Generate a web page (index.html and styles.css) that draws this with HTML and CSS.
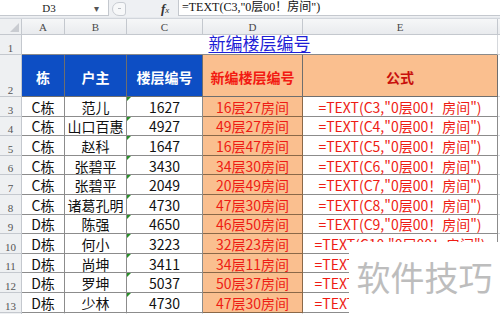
FILE: index.html
```html
<!DOCTYPE html>
<html lang="zh-CN">
<head>
<meta charset="utf-8">
<title>新编楼层编号</title>
<link rel="stylesheet" href="styles.css">
</head>
<body>
<div class="fbar">
  <div class="namebox"><span class="nb-text">D3</span><span class="nb-arrow">▾</span></div>
  <div class="fb-mid"><span class="pill"><span class="pill-dot"></span></span><span class="fx"><i>f</i><span class="fx-x">x</span></span></div>
  <div class="fb-input">=TEXT(C3,"0层00！房间")</div>
</div>
<div class="fgap"></div>
<div class="sheet">
  <div class="corner"><svg width="9" height="9" viewBox="0 0 9 9"><polygon points="9,0 9,9 0,9" fill="#c9ccd1"/></svg></div>
  <div class="ch">A</div><div class="ch">B</div><div class="ch">C</div><div class="ch">D</div><div class="ch">E</div><div class="ch end"></div>

  <div class="rh">1</div>
  <div class="title"><span>新编楼层编号</span></div>
  <div class="blank"></div>

  <div class="rh">2</div>
  <div class="hd blue">栋</div><div class="hd blue">户主</div><div class="hd blue">楼层编号</div><div class="hd peach red">新编楼层编号</div><div class="hd peach dred">公式</div>
  <div class="blank"></div>

  <div class="rh">3</div><div class="c">C栋</div><div class="c">范儿</div><div class="c num">1627</div><div class="c d">16层27房间</div><div class="c e">=TEXT(C3,"0层00！房间")</div><div class="blank"></div>
  <div class="rh">4</div><div class="c">C栋</div><div class="c">山口百惠</div><div class="c num">4927</div><div class="c d">49层27房间</div><div class="c e">=TEXT(C4,"0层00！房间")</div><div class="blank"></div>
  <div class="rh">5</div><div class="c">C栋</div><div class="c">赵科</div><div class="c num">1647</div><div class="c d">16层47房间</div><div class="c e">=TEXT(C5,"0层00！房间")</div><div class="blank"></div>
  <div class="rh">6</div><div class="c">C栋</div><div class="c">张碧平</div><div class="c num">3430</div><div class="c d">34层30房间</div><div class="c e">=TEXT(C6,"0层00！房间")</div><div class="blank"></div>
  <div class="rh">7</div><div class="c">C栋</div><div class="c">张碧平</div><div class="c num">2049</div><div class="c d">20层49房间</div><div class="c e">=TEXT(C7,"0层00！房间")</div><div class="blank"></div>
  <div class="rh">8</div><div class="c">C栋</div><div class="c">诸葛孔明</div><div class="c num">4730</div><div class="c d">47层30房间</div><div class="c e">=TEXT(C8,"0层00！房间")</div><div class="blank"></div>
  <div class="rh">9</div><div class="c">D栋</div><div class="c">陈强</div><div class="c num">4650</div><div class="c d">46层50房间</div><div class="c e">=TEXT(C9,"0层00！房间")</div><div class="blank"></div>
  <div class="rh">10</div><div class="c">D栋</div><div class="c">何小</div><div class="c num">3223</div><div class="c d">32层23房间</div><div class="c e">=TEXT(C10,"0层00！房间")</div><div class="blank"></div>
  <div class="rh">11</div><div class="c">D栋</div><div class="c">尚坤</div><div class="c num">3411</div><div class="c d">34层11房间</div><div class="c e">=TEXT(C11,"0层00！房间")</div><div class="blank"></div>
  <div class="rh">12</div><div class="c">D栋</div><div class="c">罗坤</div><div class="c num">5037</div><div class="c d">50层37房间</div><div class="c e">=TEXT(C12,"0层00！房间")</div><div class="blank"></div>
  <div class="rh">13</div><div class="c">D栋</div><div class="c">少林</div><div class="c num">4730</div><div class="c d">47层30房间</div><div class="c e">=TEXT(C13,"0层00！房间")</div><div class="blank"></div>
  <div class="rh"></div><div class="g"></div><div class="g"></div><div class="g"></div><div class="g"></div><div class="g"></div><div class="blank"></div>
</div>
<div class="watermark">软件技巧</div>
</body>
</html>
```
FILE: styles.css
```css
* { box-sizing: border-box; }
html, body { margin: 0; padding: 0; background: #fff; overflow: hidden; }
body { width: 500px; height: 314px; position: relative; font-family: "Noto Sans CJK SC", "Noto Sans", sans-serif; }

.fbar { display: flex; height: 17px; background: #eef0f3; }
.namebox { width: 109px; height: 16px; background: #fff; border: 1px solid #c4c8ce; border-top: 0; border-left: 0; display: flex; align-items: center; }
.nb-text { flex: 1; text-align: center; font-family: "Liberation Serif", "Noto Sans CJK SC", serif; font-size: 11px; color: #222; padding-left: 4px; }
.nb-arrow { width: 14px; font-size: 10px; color: #555; line-height: 1; }
.fb-mid { width: 69px; display: flex; align-items: center; padding-left: 3px; }
.pill { width: 14px; height: 14px; border: 1px solid #c8ccd2; border-radius: 7px 3px 3px 7px; background: #f7f8f9; display: flex; align-items: center; justify-content: center; }
.pill-dot { width: 3px; height: 1px; background: #b8bcc2; }
.fx { margin-left: 35px; font-family: "Liberation Serif", serif; font-size: 13px; color: #333; display: flex; align-items: baseline; }
.fx i { font-weight: bold; }
.fx-x { font-size: 9px; font-style: italic; }
.fb-input { flex: 1; height: 16px; background: #fff; border-left: 1px solid #c4c8ce; border-bottom: 1px solid #c4c8ce; font-family: "Liberation Serif", "Noto Sans CJK SC", serif; font-size: 12px; color: #111; padding-left: 3px; line-height: 15px; white-space: nowrap; }
.fgap { height: 2px; background: #e6e9ed; border-bottom: 1px solid #d2d6dc; }

.sheet { display: grid; grid-template-columns: 22px 43px 62px 76px 100px 195px 2px; grid-template-rows: 16px 20px 42px repeat(11, 19.6px) 20px; }
.sheet > div { border-right: 1px solid #d5d8dc; border-bottom: 1px solid #d5d8dc; }

.corner { background: #eef0f2; display: flex; align-items: flex-end; justify-content: flex-end; padding: 0 2px 2px 0; border-color: #c4c8ce !important; }
.ch { background: linear-gradient(#f6f7f8, #e9ebee); border-color: #c4c8ce !important; text-align: center; font-family: "Liberation Serif", serif; font-size: 11px; color: #4a4a4a; line-height: 16px; }
.ch.end { border-right: 0 !important; }
.rh { background: #eef0f2; border-color: #c4c8ce !important; font-family: "Liberation Serif", serif; font-size: 11px; color: #555; display: flex; align-items: flex-end; justify-content: center; padding-bottom: 0; }
.blank { border-right: 0 !important; }

.title { grid-column: 2 / 7; display: flex; align-items: center; justify-content: center; border-bottom-color: #8a8a8a !important; }
.title span { font-family: "Liberation Serif", "Noto Sans CJK SC", serif; font-size: 17px; color: #1f1fd6; text-decoration: underline; text-underline-offset: 2px; line-height: 20px; }

.hd { display: flex; align-items: center; justify-content: center; font-size: 14px; font-weight: bold; padding-top: 2px; border-color: #6e6e6e !important; }
.blue { background: #0d4ec4; color: #fff; }
.peach { background: #fabf8f; }
.red { color: #f21a12; }
.dred { color: #c8100c; }

.c { display: flex; align-items: center; justify-content: center; font-size: 14px; color: #111; border-color: #8c8c8c !important; white-space: nowrap; line-height: 1; padding-top: 1px; }
.num { position: relative; }
.num::before { content: ""; position: absolute; left: 0; top: 0; border-top: 4px solid #2a8f2a; border-right: 4px solid transparent; }
.d { background: #fabf8f; color: #ee1c14; border-color: #8a6848 !important; }
.e { color: #ee1c14; overflow: visible; }
.g { border-color: #d5d8dc; }

.watermark { position: absolute; left: 349px; top: 242px; width: 151px; height: 72px; background: #fff; color: #bdbdbd; font-size: 34px; display: flex; align-items: center; justify-content: center; padding-bottom: 4px; }
```
